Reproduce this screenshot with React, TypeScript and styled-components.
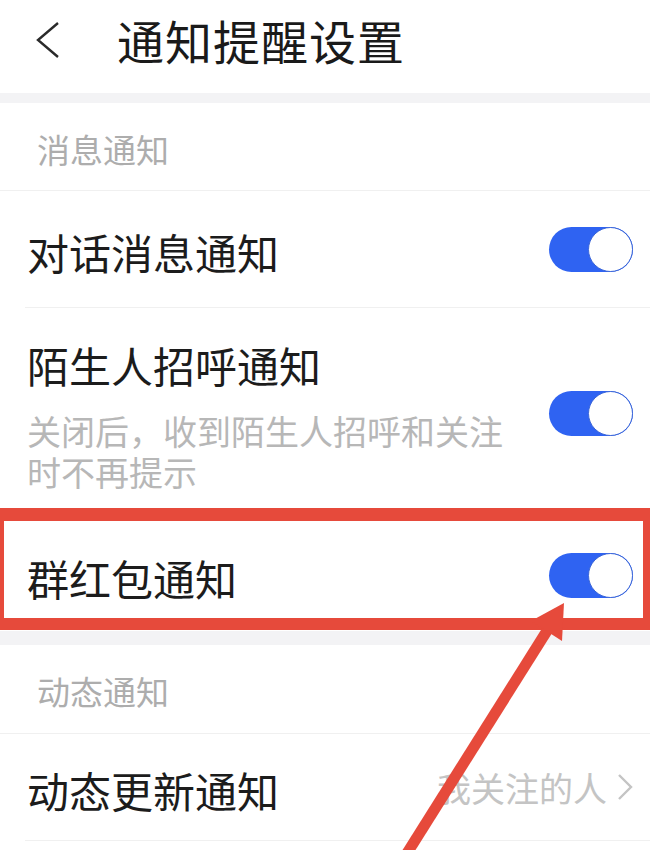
import React, { useState } from "react";
import styled, { createGlobalStyle } from "styled-components";

const GlobalStyle = createGlobalStyle`
  html, body {
    margin: 0;
    padding: 0;
    background: #ffffff;
  }
  body {
    font-family: "Noto Sans CJK SC", "Noto Sans", sans-serif;
    color: #1c1c1c;
  }
  * {
    box-sizing: border-box;
  }
`;

const Page = styled.div`
  position: relative;
  width: 650px;
  height: 850px;
  overflow: hidden;
  background: #fff;
`;

const Header = styled.div`
  height: 93px;
  display: flex;
  align-items: center;
  padding-left: 36px;
  padding-bottom: 14px;
  svg {
    width: 24px;
    height: 38px;
  }
  h1 {
    margin: 0 0 0 57px;
    font-size: 47px;
    font-weight: 400;
    line-height: 1;
    color: #1a1a1a;
    letter-spacing: 1px;
  }
`;

const Band = styled.div<{ $h: number }>`
  height: ${(p) => p.$h}px;
  background: #f3f3f5;
`;

const SectionTitle = styled.div<{ $h: number }>`
  height: ${(p) => p.$h}px;
  display: flex;
  align-items: center;
  padding: 4px 0 0 37px;
  font-size: 33px;
  color: #adadad;
  border-bottom: 1px solid #f0f0f0;
`;

const Row = styled.div<{ $h: number; $last?: boolean }>`
  position: relative;
  min-height: ${(p) => p.$h}px;
  margin-left: 25px;
  padding: 0 17px 0 2px;
  display: flex;
  align-items: center;
  justify-content: space-between;
  border-bottom: ${(p) => (p.$last ? "none" : "1px solid #f0f0f0")};
`;

const Texts = styled.div`
  display: flex;
  flex-direction: column;
`;

const Label = styled.div`
  font-size: 42px;
  line-height: 50px;
  color: #1c1c1c;
  padding-top: 6px;
`;

const Sub = styled.div`
  width: 500px;
  margin-top: 20px;
  font-size: 34px;
  line-height: 41px;
  color: #b7b7b7;
`;

const Track = styled.button<{ $on: boolean }>`
  position: relative;
  width: 84px;
  height: 45px;
  flex-shrink: 0;
  border: none;
  padding: 0;
  border-radius: 23px;
  background: ${(p) => (p.$on ? "#2f63f2" : "#dcdcdc")};
  cursor: pointer;
  &::after {
    content: "";
    position: absolute;
    top: 0;
    ${(p) => (p.$on ? "right: 0;" : "left: 0;")}
    width: 45px;
    height: 45px;
    border-radius: 50%;
    background: #fff;
    border: 1.5px solid ${(p) => (p.$on ? "#3b66d8" : "#cfcfcf")};
    box-sizing: border-box;
  }
`;

const Value = styled.div`
  display: flex;
  align-items: center;
  gap: 10px;
  font-size: 34px;
  color: #c4c4c4;
  svg {
    width: 16px;
    height: 28px;
  }
`;

const Highlight = styled.div`
  position: absolute;
  left: -8px;
  top: 508px;
  width: 658px;
  height: 122px;
  border-style: solid;
  border-color: #e64a3b;
  border-width: 13px 7px 12px 12px;
  pointer-events: none;
`;

const Overlay = styled.svg`
  position: absolute;
  left: 0;
  top: 0;
  pointer-events: none;
`;

const Toggle = ({ initial }: { initial: boolean }) => {
  const [on, setOn] = useState(initial);
  return <Track $on={on} onClick={() => setOn(!on)} aria-label="toggle" />;
};

const App = () => {
  return (
    <>
      <GlobalStyle />
      <Page>
        <Header>
          <svg viewBox="0 0 24 38" fill="none">
            <polyline
              points="22,2 2,19 22,36"
              stroke="#2a2a2a"
              strokeWidth="2.4"
              strokeLinejoin="miter"
            />
          </svg>
          <h1>通知提醒设置</h1>
        </Header>
        <Band $h={10} />
        <SectionTitle $h={88}>消息通知</SectionTitle>
        <Row $h={117}>
          <Label>对话消息通知</Label>
          <Toggle initial />
        </Row>
        <Row $h={211}>
          <Texts>
            <Label>陌生人招呼通知</Label>
            <Sub>关闭后，收到陌生人招呼和关注时不再提示</Sub>
          </Texts>
          <Toggle initial />
        </Row>
        <Row $h={112} $last>
          <Label>群红包通知</Label>
          <Toggle initial />
        </Row>
        <Band $h={14} />
        <SectionTitle $h={89}>动态通知</SectionTitle>
        <Row $h={107}>
          <Label>动态更新通知</Label>
          <Value>
            我关注的人
            <svg viewBox="0 0 16 28" fill="none">
              <polyline
                points="2,2 14,14 2,26"
                stroke="#c4c4c4"
                strokeWidth="2.4"
              />
            </svg>
          </Value>
        </Row>
        <Highlight />
        <Overlay width="650" height="850" viewBox="0 0 650 850">
          <line
            x1="404"
            y1="858"
            x2="550"
            y2="626"
            stroke="#e64a3b"
            strokeWidth="11"
          />
          <polygon points="564,603 531,621 562,641" fill="#e64a3b" />
        </Overlay>
      </Page>
    </>
  );
};

export default App;
